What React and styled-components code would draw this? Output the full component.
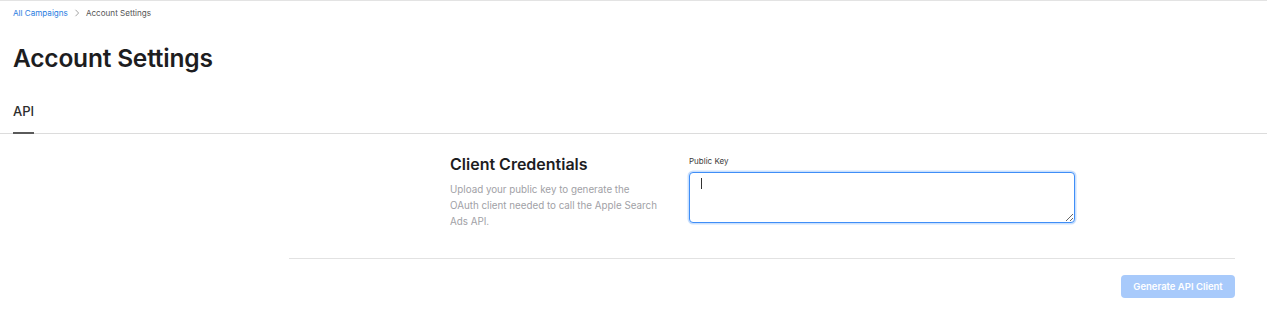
import React from "react";
import styled, { createGlobalStyle } from "styled-components";

const Global = createGlobalStyle`
  html, body { margin: 0; padding: 0; background: #fff; }
  body { font-family: Inter, "Noto Sans", "Liberation Sans", sans-serif; color: #1d1d1f; -webkit-font-smoothing: antialiased; }
  * { box-sizing: border-box; }
`;

const Page = styled.div`
  border-top: 1px solid #e3e3e3;
  min-height: 328px;
`;

const Breadcrumb = styled.nav`
  display: flex;
  align-items: center;
  gap: 6px;
  padding: 5px 13px 0;
  height: 18px;
  font-size: 8.1px;
  line-height: 12px;
`;

const Crumb = styled.a`
  color: ${(p) => (p.$link ? "#2a7de1" : "#555")};
  text-decoration: none;
`;

const Sep = styled.svg`
  width: 6px;
  height: 8px;
`;

const Title = styled.h1`
  margin: 24px 13px 0;
  font-size: 24.5px;
  line-height: 30px;
  font-weight: 600;
  letter-spacing: -0.2px;
  color: #1d1d1f;
`;

const Tabs = styled.div`
  display: flex;
  margin-top: 30px;
  padding: 0 13px;
  border-bottom: 1px solid #dcdcdc;
`;

const Tab = styled.div`
  position: relative;
  padding: 0 0 13px;
  font-size: 13px;
  line-height: 17px;
  font-weight: 500;
  color: #2d2d2d;
  &::after {
    content: "";
    position: absolute;
    left: 0;
    right: 0;
    bottom: -1px;
    height: 2px;
    background: ${(p) => (p.$active ? "#5a5a5a" : "transparent")};
  }
`;

const Content = styled.div`
  padding: 19px 32px 0 289px;
`;

const FormRow = styled.div`
  display: grid;
  grid-template-columns: 161px 239px 386px;
  padding-bottom: 28px;
`;

const Intro = styled.div`
  grid-column: 2;
`;

const SectionTitle = styled.h2`
  margin: 0;
  font-size: 16px;
  line-height: 22px;
  font-weight: 600;
  color: #1d1d1f;
`;

const Description = styled.p`
  margin: 7px 0 0;
  width: 208.5px;
  font-size: 9.8px;
  line-height: 16px;
  color: #a1a1a6;
`;

const Field = styled.div`
  grid-column: 3;
  display: flex;
  flex-direction: column;
  padding-top: 2px;
`;

const Label = styled.label`
  font-size: 8px;
  line-height: 12px;
  color: #3a3a3a;
  margin-bottom: 5px;
`;

const InputWrap = styled.div`
  position: relative;
`;

const TextArea = styled.textarea`
  display: block;
  width: 386px;
  height: 51px;
  border: 1px solid #3f8ef7;
  border-radius: 4px;
  box-shadow: 0 0 0 1.5px rgba(63, 142, 247, 0.28);
  padding: 6px 11px;
  font-family: inherit;
  font-size: 11px;
  outline: none;
  resize: vertical;
  caret-color: transparent;
`;

const Caret = styled.span`
  position: absolute;
  left: 12px;
  top: 6px;
  width: 1px;
  height: 11px;
  background: #333;
  pointer-events: none;
`;

const Divider = styled.hr`
  margin: 0;
  border: 0;
  border-top: 1px solid #e2e2e2;
`;

const Footer = styled.div`
  display: flex;
  justify-content: flex-end;
  padding-top: 16px;
`;

const Button = styled.button`
  height: 23px;
  width: 114px;
  padding: 0;
  border: 0;
  border-radius: 4px;
  background: #a8cafb;
  color: #fff;
  font-family: inherit;
  font-size: 9.5px;
  font-weight: 600;
  cursor: default;
`;

export default function App() {
  return (
    <>
      <Global />
      <Page>
        <Breadcrumb>
          <Crumb $link href="#">All Campaigns</Crumb>
          <Sep viewBox="0 0 6 8">
            <path d="M1.5 0.8 L4.6 4 L1.5 7.2" fill="none" stroke="#9a9a9a" strokeWidth="0.9" />
          </Sep>
          <Crumb>Account Settings</Crumb>
        </Breadcrumb>
        <Title>Account Settings</Title>
        <Tabs>
          <Tab $active>API</Tab>
        </Tabs>
        <Content>
          <FormRow>
            <Intro>
              <SectionTitle>Client Credentials</SectionTitle>
              <Description>
                Upload your public key to generate the OAuth client needed to call the Apple Search Ads API.
              </Description>
            </Intro>
            <Field>
              <Label>Public Key</Label>
              <InputWrap>
                <TextArea autoFocus />
                <Caret />
              </InputWrap>
            </Field>
          </FormRow>
          <Divider />
          <Footer>
            <Button disabled>Generate API Client</Button>
          </Footer>
        </Content>
      </Page>
    </>
  );
}
